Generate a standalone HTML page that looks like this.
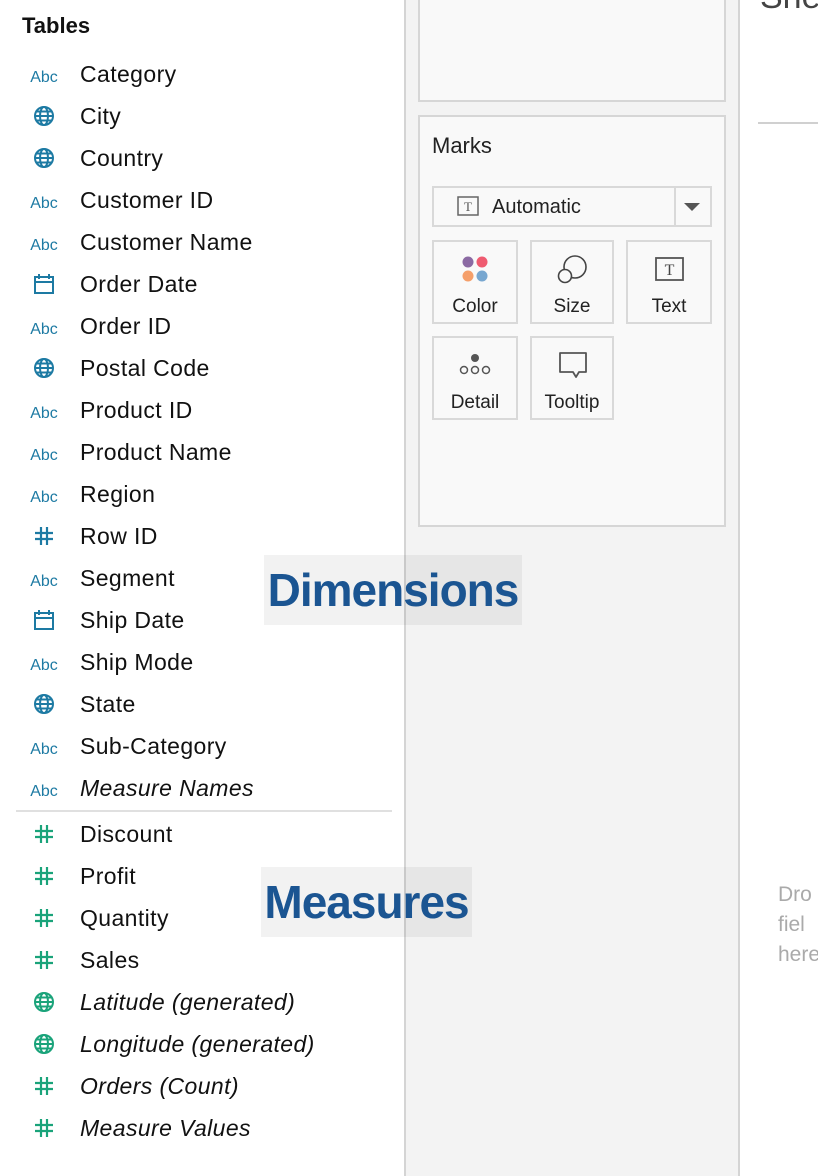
<!DOCTYPE html>
<html><head><meta charset="utf-8"><style>
*{margin:0;padding:0;box-sizing:border-box}
body{width:818px;height:1176px;position:relative;overflow:hidden;background:#fff;font-family:"Liberation Sans",sans-serif;color:#111}
.a{position:absolute}
.row{position:absolute;left:0;height:30px;line-height:30px;font-size:23px;letter-spacing:0.4px}
.row .t{position:absolute;left:80px;top:0;white-space:nowrap}
.row .i{position:absolute;left:28px;top:4px;width:32px;text-align:center;font-size:16px;color:#1d7aa3;letter-spacing:0}
.row svg{position:absolute;left:33px;top:4px}
.it{font-style:italic}
.btn{position:absolute;background:#f9f9f9;border:2px solid #d9d9d9;font-size:19px;color:#222;text-align:center}
.btn span{position:absolute;left:0;right:0;bottom:4px}
.lab{position:absolute;background:rgba(0,0,0,0.05);color:#1b5592;font-weight:bold;font-size:46px;line-height:70px;text-align:center;letter-spacing:-1px}
</style></head><body>
<div class="a" style="left:404px;top:0;width:336px;height:1176px;background:#f3f3f3;border-left:2px solid #d4d4d4;border-right:2px solid #d4d4d4"></div>
<div class="a" style="left:418px;top:-4px;width:308px;height:106px;background:#f9f9f9;border:2px solid #d6d6d6"></div>
<div class="a" style="left:418px;top:115px;width:308px;height:412px;background:#f9f9f9;border:2px solid #d6d6d6"></div>
<div class="a" style="left:432px;top:133px;font-size:22px;color:#222">Marks</div>
<div class="a" style="left:432px;top:186px;width:280px;height:41px;background:#f9f9f9;border:2px solid #d9d9d9"></div>
<div class="a" style="left:674px;top:188px;width:2px;height:37px;background:#d9d9d9"></div>
<div class="a" style="left:684px;top:203px;width:0;height:0;border-left:8px solid transparent;border-right:8px solid transparent;border-top:8px solid #555"></div>
<svg class="a" style="left:457px;top:196px" width="22" height="20"><rect x="1" y="1" width="20" height="18" fill="none" stroke="#666" stroke-width="1.5"/><text x="11" y="15" font-size="13" text-anchor="middle" fill="#555" font-family="Liberation Serif">T</text></svg>
<div class="a" style="left:492px;top:196px;font-size:20px;color:#222">Automatic</div>

<div class="btn" style="left:432px;top:240px;width:86px;height:84px"><span>Color</span>
<svg class="a" style="left:26px;top:12px" width="30" height="30"><circle cx="8" cy="8" r="5.5" fill="#8b6aa3"/><circle cx="22" cy="8" r="5.5" fill="#ef5b70"/><circle cx="8" cy="22" r="5.5" fill="#f59f6a"/><circle cx="22" cy="22" r="5.5" fill="#78a7d0"/></svg></div>
<div class="btn" style="left:530px;top:240px;width:84px;height:84px"><span>Size</span>
<svg class="a" style="left:24px;top:12px" width="34" height="32"><circle cx="19" cy="13" r="11" fill="none" stroke="#444" stroke-width="1.6"/><circle cx="9" cy="22" r="6.5" fill="#f9f9f9" stroke="#444" stroke-width="1.6"/></svg></div>
<div class="btn" style="left:626px;top:240px;width:86px;height:84px"><span>Text</span>
<svg class="a" style="left:27px;top:15px" width="30" height="26"><rect x="1" y="1" width="27" height="22" fill="none" stroke="#555" stroke-width="1.8"/><text x="14.5" y="18" font-size="16" text-anchor="middle" fill="#444" font-family="Liberation Serif">T</text></svg></div>
<div class="btn" style="left:432px;top:336px;width:86px;height:84px"><span>Detail</span>
<svg class="a" style="left:24px;top:14px" width="36" height="24"><circle cx="17" cy="6" r="4" fill="#555"/><circle cx="6" cy="18" r="3.5" fill="none" stroke="#555" stroke-width="1.5"/><circle cx="17" cy="18" r="3.5" fill="none" stroke="#555" stroke-width="1.5"/><circle cx="28" cy="18" r="3.5" fill="none" stroke="#555" stroke-width="1.5"/></svg></div>
<div class="btn" style="left:530px;top:336px;width:84px;height:84px"><span>Tooltip</span>
<svg class="a" style="left:26px;top:13px" width="32" height="30"><path d="M2 2H28V21H21L18 26L15 21H2Z" fill="none" stroke="#555" stroke-width="1.8" stroke-linejoin="round"/></svg></div>

<div class="a" style="left:760px;top:-22px;font-size:34px;color:#444">She</div>
<div class="a" style="left:758px;top:122px;width:60px;height:2px;background:#d0d0d0"></div>
<div class="a" style="left:778px;top:880px;font-size:21px;line-height:30px;color:#aaa">Dro<br>fiel<br>here</div>

<div class="a" style="left:22px;top:13px;font-size:22px;font-weight:bold">Tables</div>
<div class="a" style="left:16px;top:810px;width:376px;height:2px;background:#e0e0e0"></div>

<div id="rows"></div>
<div class="lab" style="left:264px;top:555px;width:258px;height:70px">Dimensions</div>
<div class="lab" style="left:261px;top:867px;width:211px;height:70px">Measures</div>
<script>
const globe=c=>`<svg width="22" height="22" viewBox="0 0 22 22"><g fill="none" stroke="${c}" stroke-width="2"><circle cx="11" cy="11" r="9"/><ellipse cx="11" cy="11" rx="4" ry="9"/><path d="M2 11H20M3.5 6.5H18.5M3.5 15.5H18.5"/></g></svg>`;
const cal=c=>`<svg width="22" height="22" viewBox="0 0 22 22"><g fill="none" stroke="${c}" stroke-width="2"><rect x="2" y="4" width="18" height="16"/><path d="M2 9H20M6 1V6M16 1V6"/></g></svg>`;
const hash=c=>`<svg width="22" height="22" viewBox="0 0 22 22"><g fill="none" stroke="${c}" stroke-width="2.2"><path d="M8 2V20M14 2V20M2 8H20M2 14H20"/></g></svg>`;
const B='#1d7aa3',G='#1aa37a';
const rows=[['a','Category'],['g','City'],['g','Country'],['a','Customer ID'],['a','Customer Name'],['c','Order Date'],['a','Order ID'],['g','Postal Code'],['a','Product ID'],['a','Product Name'],['a','Region'],['h','Row ID'],['a','Segment'],['c','Ship Date'],['a','Ship Mode'],['g','State'],['a','Sub-Category'],['a','Measure Names',1],
['H','Discount'],['H','Profit'],['H','Quantity'],['H','Sales'],['G','Latitude (generated)',1],['G','Longitude (generated)',1],['H','Orders (Count)',1],['H','Measure Values',1]];
let h='';rows.forEach((r,i)=>{const y=(i<18?74+i*42:834+(i-18)*42)-15;let ic;
if(r[0]=='a')ic='<div class="i">Abc</div>';else if(r[0]=='g')ic=globe(B);else if(r[0]=='G')ic=globe(G);else if(r[0]=='c')ic=cal(B);else if(r[0]=='h')ic=hash(B);else ic=hash(G);
h+=`<div class="row" style="top:${y}px">${ic}<div class="t${r[2]?' it':''}">${r[1]}</div></div>`});
document.getElementById('rows').innerHTML=h;
</script>
</body></html>
